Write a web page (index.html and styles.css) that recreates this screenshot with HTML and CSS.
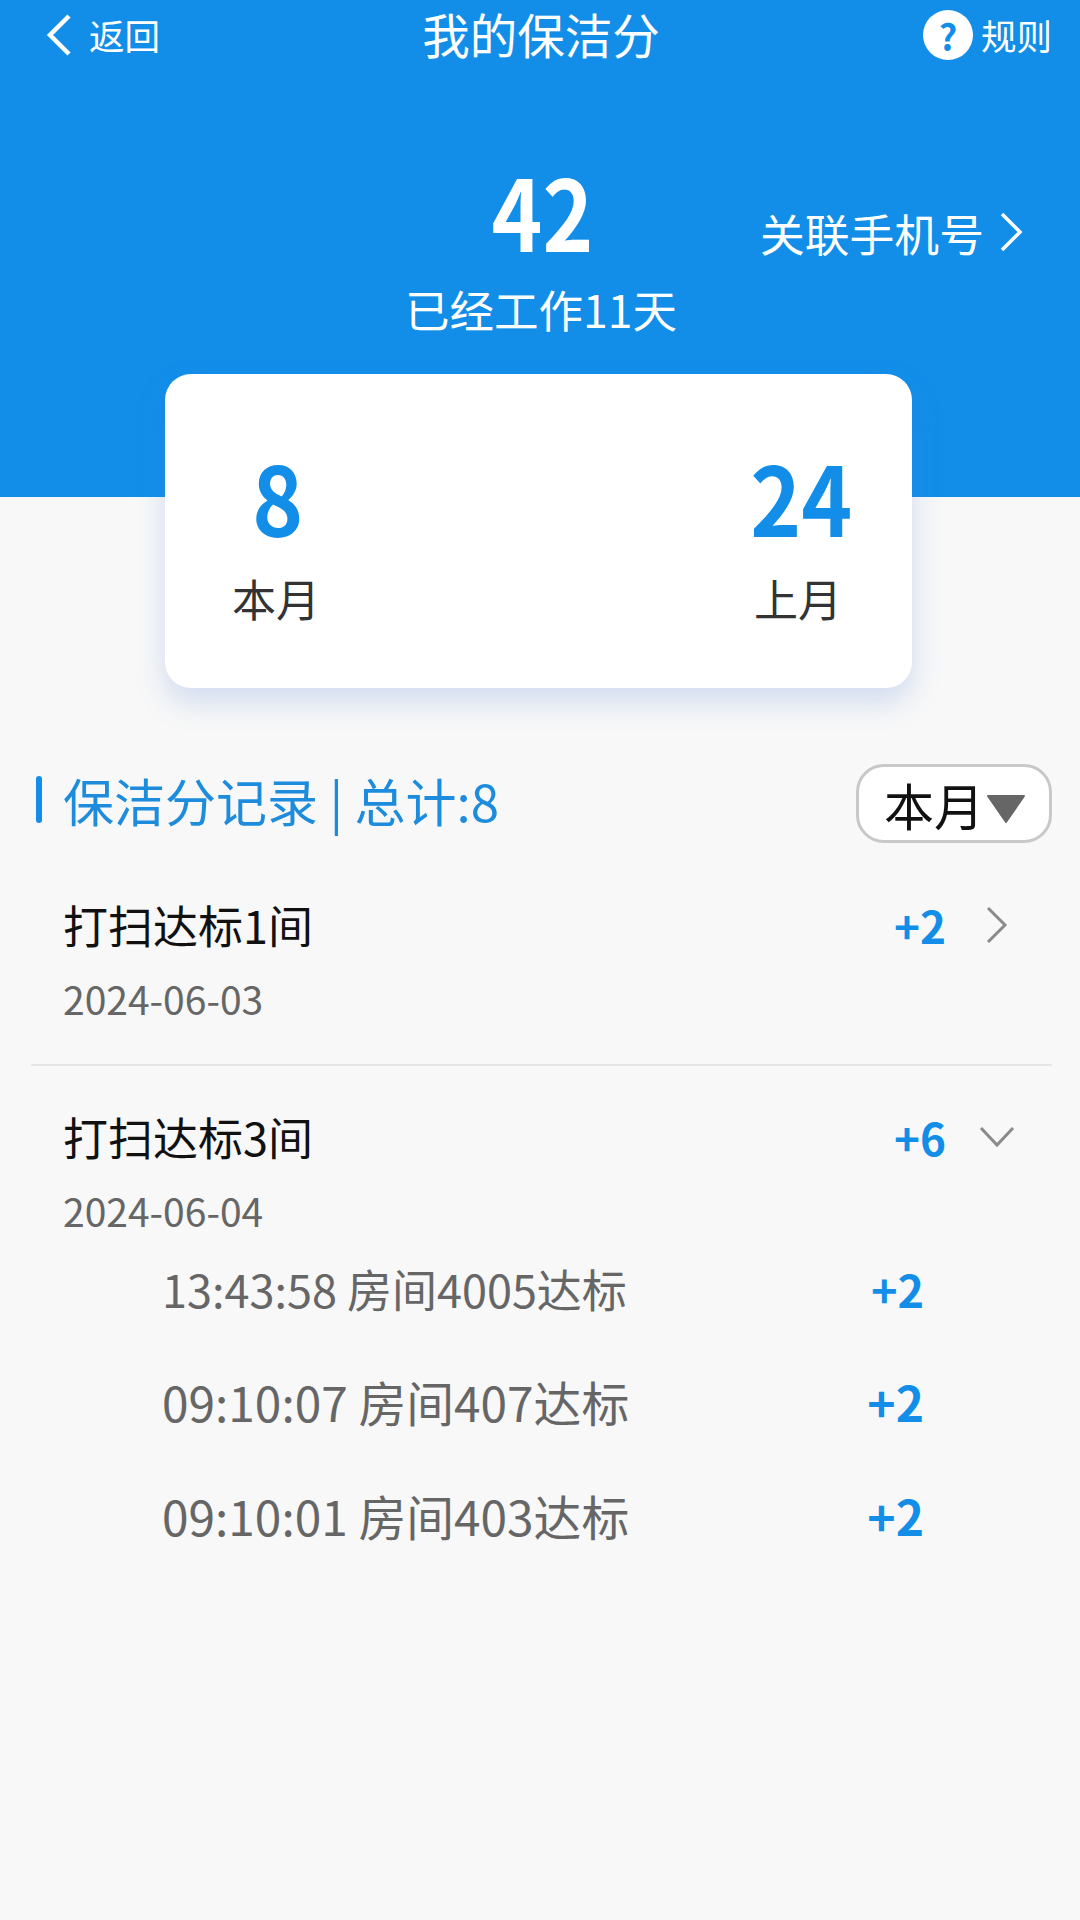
FILE: index.html
```html
<!DOCTYPE html>
<html lang="zh-CN">
<head>
<meta charset="utf-8">
<title>我的保洁分</title>
<link rel="stylesheet" href="styles.css">
</head>
<body>
<div class="page">
  <header class="hero">
    <div class="topbar">
      <div class="back">
        <svg class="back-icon" viewBox="0 0 26 42"><path d="M23 2 L4 21 L23 40"/></svg>
        <span>返回</span>
      </div>
      <div class="title">我的保洁分</div>
      <div class="rules">
        <span class="help">?</span>
        <span>规则</span>
      </div>
    </div>
    <div class="score-row">
      <div></div>
      <div class="score">
        <div class="score-num">42</div>
        <div class="score-sub">已经工作11天</div>
      </div>
      <div class="link">
        <span>关联手机号</span>
        <svg class="link-icon" viewBox="0 0 24 40"><path d="M3 2 L21 20 L3 38"/></svg>
      </div>
    </div>
  </header>

  <section class="card">
    <div class="stat">
      <div class="stat-num">8</div>
      <div class="stat-label">本月</div>
    </div>
    <div class="stat">
      <div class="stat-num">24</div>
      <div class="stat-label">上月</div>
    </div>
  </section>

  <div class="section-head">
    <div class="section-title"><i class="mark"></i><span>保洁分记录 | 总计:8</span></div>
    <div class="select">
      <span>本月</span>
      <svg class="select-arrow" viewBox="0 0 42 30"><path d="M3 2 H39 L21 28 Z"/></svg>
    </div>
  </div>

  <div class="record">
    <div class="record-main">
      <div class="record-title">打扫达标1间</div>
      <div class="record-points">+2</div>
      <svg class="chev" viewBox="0 0 40 40"><path d="M11 3 L28 20 L11 37"/></svg>
    </div>
    <div class="record-date">2024-06-03</div>
  </div>

  <div class="record no-border">
    <div class="record-main">
      <div class="record-title">打扫达标3间</div>
      <div class="record-points">+6</div>
      <svg class="chev" viewBox="0 0 40 40"><path d="M4 11 L20 28 L36 11"/></svg>
    </div>
    <div class="record-date">2024-06-04</div>
    <div class="details">
      <div class="detail detail-sm"><span>13:43:58 房间4005达标</span><b>+2</b></div>
      <div class="detail"><span>09:10:07 房间407达标</span><b>+2</b></div>
      <div class="detail"><span>09:10:01 房间403达标</span><b>+2</b></div>
    </div>
  </div>
</div>
</body>
</html>
```
FILE: styles.css
```css
* { box-sizing: border-box; }
html, body { margin: 0; padding: 0; }
body {
  width: 1080px;
  height: 1920px;
  overflow: hidden;
  background: #f8f8f8;
  font-family: "Noto Sans CJK SC", "Noto Sans", sans-serif;
}
.page { width: 1080px; }

.hero {
  height: 497px;
  background: #128ee9;
  color: #fff;
}
.topbar {
  height: 70px;
  padding: 0 28px 0 46px;
  display: grid;
  grid-template-columns: 1fr auto 1fr;
  align-items: center;
}
.back { display: flex; align-items: center; gap: 17px; font-size: 35.5px; line-height: 50px; }
.back-icon { width: 26px; height: 42px; }
.back-icon path { fill: none; stroke: #fff; stroke-width: 4.5; }
.link-icon path { fill: none; stroke: #fff; stroke-width: 3.5; }
.title { font-size: 47.5px; line-height: 70px; margin: -2px 16px 0 0; }
.rules { display: flex; justify-content: flex-end; align-items: center; gap: 8px; font-size: 35.5px; line-height: 50px; }
.help {
  width: 50px;
  height: 50px;
  border-radius: 50%;
  background: #fff;
  color: #128ee9;
  font-size: 36px;
  font-weight: 700;
  line-height: 50px;
  text-align: center;
}

.score-row {
  display: grid;
  grid-template-columns: 1fr auto 1fr;
  padding-top: 86px;
  padding-left: 5px;
}
.score { text-align: center; }
.score-num { font-size: 98px; font-weight: 700; line-height: 106px; transform: scaleX(0.88); }
.score-sub { font-size: 44.5px; line-height: 60px; margin-top: 17px; padding-right: 3px; }
.link {
  display: flex;
  align-items: center;
  height: 50px;
  margin-top: 51px;
  margin-left: 80px;
  gap: 15px;
  font-size: 44.8px;
  white-space: nowrap;
}
.link-icon { width: 24px; height: 40px; flex: none; }

.card {
  width: 747px;
  height: 314px;
  margin: -123px 0 0 165px;
  padding: 69px 61px 0 61px;
  background: #fff;
  border-radius: 26px;
  box-shadow: 0 14px 30px rgba(70, 120, 210, 0.22);
  display: flex;
  justify-content: space-between;
  position: relative;
}
.stat { width: 100px; text-align: center; }
.stat:last-child { width: 106px; }
.stat-num { padding-left: 4px; font-size: 96px; font-weight: 700; line-height: 106px; color: #128ee9; white-space: nowrap; transform: scaleX(0.9); }
.stat:last-child .stat-num { padding: 0 6px 0 0; }
.stat-label { font-size: 44px; line-height: 60px; margin-top: 19px; color: #333; white-space: nowrap; }

.section-head {
  margin-top: 76px;
  padding: 0 28px 0 36px;
  height: 79px;
  display: flex;
  justify-content: space-between;
  align-items: center;
}
.section-title {
  display: flex;
  align-items: center;
  gap: 21px;
  color: #1e8cdc;
  font-size: 51px;
  line-height: 70px;
}
.section-title span { margin-top: -7px; }
.mark { width: 6px; height: 47px; border-radius: 3px; background: #128ee9; margin-top: -8px; }
.select {
  width: 196px;
  height: 79px;
  padding-left: 25px;
  display: flex;
  align-items: center;
  gap: 1px;
  background: #fff;
  border: 3px solid #c8c8c8;
  border-radius: 28px;
  color: #111;
  font-size: 50px;
}
.select-arrow { width: 42px; height: 30px; margin-top: 10px; }
.select-arrow path { fill: #666; stroke: #666; stroke-width: 2; stroke-linejoin: round; }

.record {
  margin: 0 28px 0 31px;
  padding: 0 32px;
  border-bottom: 2px solid #e6e6e6;
  height: 223px;
}
.record.no-border { border-bottom: 0; height: auto; }
.record-main {
  display: flex;
  align-items: center;
  padding-top: 51px;
}
.no-border .record-main { padding-top: 40px; }
.record-title { flex: 1; color: #111; font-size: 45px; line-height: 62px; }
.record-points { color: #128ee9; font-size: 44px; font-weight: 700; line-height: 62px; }
.chev { width: 40px; height: 40px; margin: 0 3px 0 31px; }
.chev path { fill: none; stroke: #8a8a8a; stroke-width: 3; }
.record-date { color: #666; font-size: 39px; line-height: 54px; margin-top: 15px; }

.details { margin-top: -4px; margin-left: 99px; padding-right: 96px; }
.detail {
  display: flex;
  justify-content: space-between;
  align-items: center;
  height: 114px;
  color: #666;
  font-size: 47.8px;
}
.detail-sm { font-size: 45px; height: 111px; }
.detail b { color: #128ee9; font-weight: 700; font-size: 48px; }
.detail-sm b { font-size: 45px; }
```
